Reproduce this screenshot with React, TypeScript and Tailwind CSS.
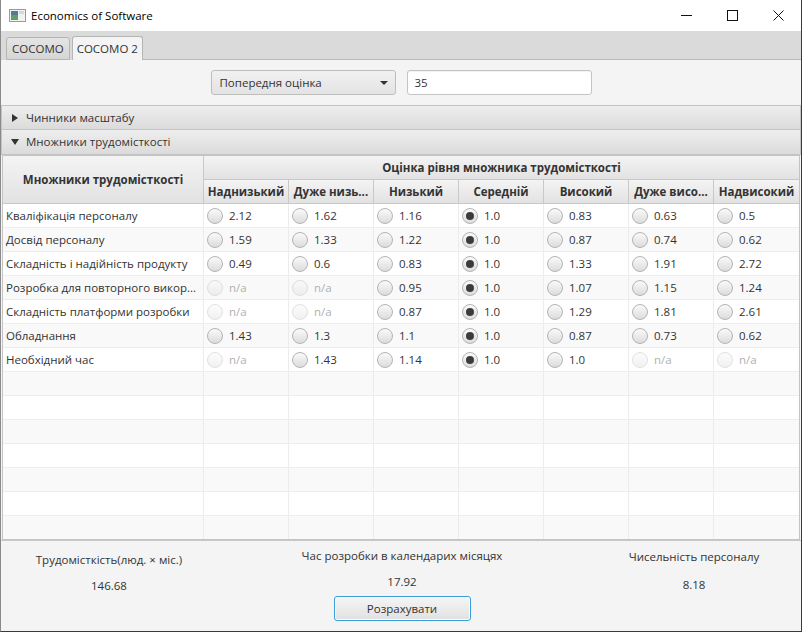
import React from "react";

const COLS = ["Наднизький", "Дуже низь...", "Низький", "Середній", "Високий", "Дуже висо...", "Надвисокий"];

const ROWS: { name: string; vals: string[] }[] = [
  { name: "Кваліфікація персоналу", vals: ["2.12", "1.62", "1.16", "1.0", "0.83", "0.63", "0.5"] },
  { name: "Досвід персоналу", vals: ["1.59", "1.33", "1.22", "1.0", "0.87", "0.74", "0.62"] },
  { name: "Складність і надійність продукту", vals: ["0.49", "0.6", "0.83", "1.0", "1.33", "1.91", "2.72"] },
  { name: "Розробка для повторного викор...", vals: ["n/a", "n/a", "0.95", "1.0", "1.07", "1.15", "1.24"] },
  { name: "Складність платформи розробки", vals: ["n/a", "n/a", "0.87", "1.0", "1.29", "1.81", "2.61"] },
  { name: "Обладнання", vals: ["1.43", "1.3", "1.1", "1.0", "0.87", "0.73", "0.62"] },
  { name: "Необхідний час", vals: ["n/a", "1.43", "1.14", "1.0", "1.0", "n/a", "n/a"] },
];

const SELECTED_COL = 3;

const Radio = ({ checked, disabled }: { checked?: boolean; disabled?: boolean }) => (
  <span
    className={
      "flex h-4 w-4 shrink-0 items-center justify-center rounded-full border border-[#b4b4b4] bg-linear-to-b from-[#fafafa] to-[#dcdcdc] " +
      (disabled ? "opacity-40" : "")
    }
  >
    {checked && <span className="h-2 w-2 rounded-full bg-[#3c3c3c]" />}
  </span>
);

const WindowIcon = () => (
  <svg width="17" height="13" viewBox="0 0 17 13">
    <rect x="0.5" y="0.5" width="16" height="12" fill="#f2f2f2" stroke="#9a9a9a" />
    <rect x="2" y="2" width="7" height="9" fill="#4f7f8f" />
    <rect x="2" y="6" width="7" height="5" fill="#5e9e6a" />
    <rect x="10" y="2" width="5" height="3" fill="#d8d8d8" />
  </svg>
);

export default function App() {
  return (
    <div className="flex h-[632px] w-[802px] flex-col border-r border-b border-l border-r-[#3a3a3a] border-b-[#3a3a3a] border-l-[#8a8a8a] bg-[#f4f4f4] font-['Open_Sans','Noto_Sans',sans-serif] text-[11.5px] text-[#333333]">
      {/* Title bar */}
      <div className="flex h-[31px] shrink-0 items-center bg-white">
        <div className="ml-[8px] flex items-center">
          <WindowIcon />
        </div>
        <span className="ml-[5px] text-black">Economics of Software</span>
        <div className="ml-auto flex h-full">
          <div className="flex w-[46px] items-center justify-center">
            <svg width="11" height="11" viewBox="0 0 11 11">
              <line x1="0" y1="5.5" x2="11" y2="5.5" stroke="#111" strokeWidth="1" />
            </svg>
          </div>
          <div className="flex w-[46px] items-center justify-center">
            <svg width="11" height="11" viewBox="0 0 11 11">
              <rect x="0.5" y="0.5" width="10" height="10" fill="none" stroke="#111" strokeWidth="1" />
            </svg>
          </div>
          <div className="flex w-[46px] items-center justify-center">
            <svg width="11" height="11" viewBox="0 0 11 11">
              <path d="M0.5 0.5 L10.5 10.5 M10.5 0.5 L0.5 10.5" stroke="#111" strokeWidth="1" />
            </svg>
          </div>
        </div>
      </div>

      {/* Tab bar */}
      <div className="flex h-[29px] shrink-0 items-end bg-[#dadada] pl-[5px]">
        <div className="flex h-[23px] items-center rounded-t-[3px] border border-[#b5b5b5] bg-linear-to-b from-[#e4e4e4] to-[#d6d6d6] px-[5px] text-[#333]">
          COCOMO
        </div>
        <div className="ml-[2px] flex h-[24px] items-center rounded-t-[3px] border border-b-0 border-[#b5b5b5] bg-[#f4f4f4] px-[4px] text-[#333]">
          COCOMO 2
        </div>
        <div className="h-px flex-1 bg-[#b8b8b8]" />
      </div>

      {/* Estimate row */}
      <div className="flex h-[45px] shrink-0 items-center justify-center gap-[11px]">
        <div className="flex h-[25px] w-[185px] items-center justify-between rounded-[3px] border border-[#bdbdbd] bg-linear-to-b from-[#f1f1f1] to-[#e3e3e3] pr-[7px] pl-[8px]">
          <span>Попередня оцінка</span>
          <svg width="8" height="4" viewBox="0 0 8 4">
            <path d="M0 0 L8 0 L4 4 Z" fill="#333" />
          </svg>
        </div>
        <div className="flex h-[25px] w-[185px] items-center rounded-[3px] border border-[#c4c4c4] bg-white pl-[7px] shadow-[inset_0_1px_1px_rgba(0,0,0,0.06)]">
          35
        </div>
      </div>

      {/* Accordion headers */}
      <div className="flex h-[25px] shrink-0 items-center border border-[#c4c4c4] bg-linear-to-b from-[#eeeeee] to-[#dbdbdb]">
        <svg className="ml-[10px]" width="6" height="8" viewBox="0 0 6 8">
          <path d="M0 0 L6 4 L0 8 Z" fill="#333" />
        </svg>
        <span className="ml-[8px]">Чинники масштабу</span>
      </div>
      <div className="flex h-[25px] shrink-0 items-center border border-t-0 border-[#c4c4c4] bg-linear-to-b from-[#eeeeee] to-[#dbdbdb]">
        <svg className="ml-[9px]" width="8" height="6" viewBox="0 0 8 6">
          <path d="M0 0 L8 0 L4 6 Z" fill="#333" />
        </svg>
        <span className="ml-[7px]">Множники трудомісткості</span>
      </div>

      {/* Table */}
      <div className="mx-px flex h-[385px] shrink-0 flex-col overflow-hidden border border-[#c4c4c4] bg-white">
        <div className="grid shrink-0 grid-cols-[201px_repeat(7,85px)] grid-rows-[24px_24px] font-bold">
          <div className="row-span-2 flex items-center justify-center border-r border-b border-[#c8c8c8] bg-linear-to-b from-[#f4f4f4] to-[#e2e2e2]">
            Множники трудомісткості
          </div>
          <div className="col-span-7 flex items-center justify-center border-b border-[#c8c8c8] bg-linear-to-b from-[#f4f4f4] to-[#e2e2e2]">
            Оцінка рівня множника трудомісткості
          </div>
          {COLS.map((c, i) => (
            <div
              key={c}
              className={
                "flex items-center justify-center overflow-hidden border-b border-[#c8c8c8] bg-linear-to-b from-[#f4f4f4] to-[#e2e2e2] whitespace-nowrap " +
                (i < 6 ? "border-r" : "")
              }
            >
              {c}
            </div>
          ))}
        </div>

        {Array.from({ length: 14 }).map((_, r) => {
          const row = ROWS[r];
          return (
            <div
              key={r}
              className={
                "grid h-[24px] shrink-0 grid-cols-[201px_repeat(7,85px)] border-b border-[#ededed] " +
                (r % 2 === 1 ? "bg-[#f9f9f9]" : "bg-white")
              }
            >
              <div className="flex items-center overflow-hidden border-r border-[#ececec] pl-[3px] whitespace-nowrap">
                {row ? row.name : ""}
              </div>
              {Array.from({ length: 7 }).map((__, c) => {
                const v = row ? row.vals[c] : null;
                const na = v === "n/a";
                return (
                  <div
                    key={c}
                    className={"flex items-center pl-[3px] " + (c < 6 ? "border-r border-[#ececec]" : "")}
                  >
                    {v && (
                      <>
                        <Radio checked={c === SELECTED_COL} disabled={na} />
                        <span className={"ml-[6px] " + (na ? "text-[#b0b0b0]" : "")}>{v}</span>
                      </>
                    )}
                  </div>
                );
              })}
            </div>
          );
        })}
      </div>

      {/* Results */}
      <div className="grid h-[90px] shrink-0 grid-cols-[216px_370px_1fr] border-t border-[#c8c8c8]">
        <div className="flex flex-col items-center pt-[11px]">
          <span className="leading-[16px]">Трудомісткість(люд. × міс.)</span>
          <span className="mt-[10px] leading-[16px]">146.68</span>
        </div>
        <div className="flex flex-col items-center pt-[7px]">
          <span className="leading-[16px]">Час розробки в календарих місяцях</span>
          <span className="mt-[10px] leading-[16px]">17.92</span>
          <button className="mt-[6px] flex h-[25px] w-[137px] items-center justify-center rounded-[3px] border border-[#3a9fd8] bg-linear-to-b from-[#f5f5f5] to-[#e1e1e1] shadow-[inset_0_0_0_1px_#ffffff] text-[#333]">
            Розрахувати
          </button>
        </div>
        <div className="flex flex-col items-center pt-[8px]">
          <span className="leading-[16px]">Чисельність персоналу</span>
          <span className="mt-[12px] leading-[16px]">8.18</span>
        </div>
      </div>
    </div>
  );
}
